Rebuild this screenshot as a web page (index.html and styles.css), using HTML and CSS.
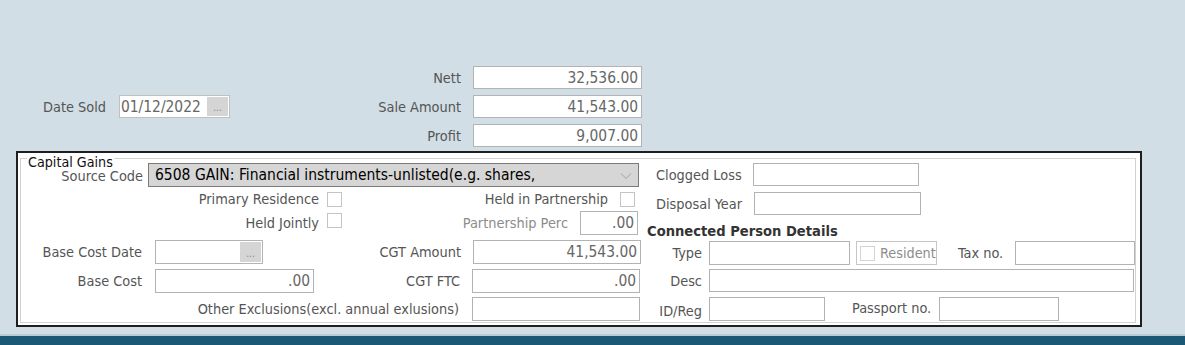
FILE: index.html
```html
<!DOCTYPE html>
<html lang="en">
<head>
  <meta charset="UTF-8">
  <title>Capital Gains</title>
  <link rel="stylesheet" href="styles.css">
</head>
<body>

  <section class="sale">
    <span class="lbl lbl--date">Date Sold</span>
    <div class="field field--date-sold">
      <span class="field__text">01/12/2022</span>
      <span class="dots">...</span>
    </div>

    <span class="lbl lbl--r1">Nett</span>
    <div class="field field--num r1">32,536.00</div>
    <span class="lbl lbl--r2">Sale Amount</span>
    <div class="field field--num r2">41,543.00</div>
    <span class="lbl lbl--r3">Profit</span>
    <div class="field field--num r3">9,007.00</div>
  </section>

  <section class="group">
    <div class="frame">
      <span class="frame__title">Capital Gains</span>

      <div class="panel panel--left">
        <div class="row row--1">
          <span class="lbl w122">Source Code</span>
          <div class="select">
            <span>6508 GAIN: Financial instruments-unlisted(e.g. shares,</span>
            <svg class="chev" width="12" height="8" viewBox="0 0 12 8"><polyline points="1,1.5 6,6.5 11,1.5" fill="none" stroke="#b8b8b8" stroke-width="1.2"/></svg>
          </div>
        </div>
        <div class="row row--2">
          <span class="lbl w298">Primary Residence</span>
          <span class="check gap8"></span>
          <span class="lbl w266">Held in Partnership</span>
          <span class="check gap12"></span>
        </div>
        <div class="row row--3">
          <span class="lbl w298">Held Jointly</span>
          <span class="check gap8 check--up"></span>
          <span class="lbl lbl--off w226">Partnership Perc</span>
          <div class="field field--num perc">.00</div>
        </div>
        <div class="row row--4">
          <span class="lbl w121">Base Cost Date</span>
          <div class="field field--date base-date">
            <span class="field__text"></span>
            <span class="dots">...</span>
          </div>
          <span class="lbl w198">CGT Amount</span>
          <div class="field field--num amount">41,543.00</div>
        </div>
        <div class="row row--5">
          <span class="lbl w121">Base Cost</span>
          <div class="field field--num base-cost">.00</div>
          <span class="lbl w146">CGT FTC</span>
          <div class="field field--num amount">.00</div>
        </div>
        <div class="row row--6">
          <span class="lbl w438">Other Exclusions(excl. annual exlusions)</span>
          <div class="field amount other"></div>
        </div>
      </div>

      <div class="panel panel--right">
        <div class="row row--r1">
          <span class="lbl lbl--left w108">Clogged Loss</span>
          <div class="field loss"></div>
        </div>
        <div class="row row--r2">
          <span class="lbl lbl--left w109">Disposal Year</span>
          <div class="field year"></div>
        </div>
        <h3 class="heading">Connected Person Details</h3>
        <div class="row row--r4">
          <span class="lbl w57">Type</span>
          <div class="field type"></div>
          <div class="resident">
            <span class="check check--small"></span>
            <span>Resident</span>
          </div>
          <span class="lbl lbl--left tax-lbl">Tax no.</span>
          <div class="field tax"></div>
        </div>
        <div class="row row--r5">
          <span class="lbl w57">Desc</span>
          <div class="field desc"></div>
        </div>
        <div class="row row--r6">
          <span class="lbl lbl--low w57">ID/Reg</span>
          <div class="field idreg"></div>
          <span class="lbl lbl--left passport-lbl">Passport no.</span>
          <div class="field passport"></div>
        </div>
      </div>
    </div>
  </section>

  <div class="footer-bar"></div>

</body>
</html>
```

FILE: styles.css
```css
* {
  box-sizing: border-box;
  margin: 0;
  padding: 0;
}

:root {
  --page-bg: #d1dee5;
  --label: #555555;
  --label-off: #8c8c8c;
  --value: #666666;
  --field-border: #b3b3b3;
  --font-size: 14.4px;
  --value-size: 15.4px;
}

html, body {
  height: 345px;
  overflow: hidden;
}
body {
  background: var(--page-bg);
  font-family: "DejaVu Sans Condensed", "DejaVu Sans", sans-serif;
  font-size: var(--font-size);
  color: var(--label);
  display: flex;
  flex-direction: column;
}

/* Labels */

.lbl {
  display: block;
  text-align: right;
  white-space: nowrap;
  line-height: 16px;
  flex: none;
}
.lbl--left { text-align: left; }
.lbl--off { color: var(--label-off); }

.w57  { width: 57px; margin-right: 7px; }
.w108 { width: 108px; padding-left: 11px; }
.w109 { width: 109px; padding-left: 11px; }
.w121 { width: 121px; margin-right: 13px; }
.w122 { width: 122px; margin-right: 5px; line-height: 14px; margin-top: 2px; }
.w146 { width: 146px; margin-right: 12px; }
.w198 { width: 198px; margin-right: 12px; }
.w226 { width: 226px; margin-right: 12px; }
.w266 { width: 266px; }
.w298 { width: 298px; }
.w438 { width: 438px; margin-right: 13px; }

/* Inputs */

.field {
  height: 23px;
  background: #fff;
  border: 1px solid var(--field-border);
  color: var(--value);
  font-size: var(--value-size);
  display: flex;
  align-items: center;
  flex: none;
  white-space: nowrap;
}
.field--num {
  justify-content: flex-end;
  padding-right: 3px;
}
.field--date .field__text,
.field--date-sold .field__text {
  flex: 1;
  padding-left: 1px;
}
.dots {
  align-self: stretch;
  width: 21px;
  margin: 1px;
  background: #d5d5d5;
  color: #8a8a8a;
  font-size: 10px;
  display: flex;
  justify-content: center;
  align-items: flex-end;
  padding-bottom: 3px;
}

.check {
  display: block;
  width: 15px;
  height: 15px;
  border: 1px solid #c4c4c4;
  background: #fff;
  flex: none;
}
.gap8 { margin-left: 8px; }
.gap12 { margin-left: 12px; }
.check--up { margin-top: -5px; }

/* Top: sale figures */

.sale {
  height: 151px;
  padding-top: 66px;
  display: grid;
  grid-template-columns: 119px 111px 243px 169px;
  grid-template-rows: 23px 23px 23px;
  row-gap: 6px;
  align-items: center;
}
.lbl--date {
  grid-column: 1;
  grid-row: 2;
  padding-right: 13px;
}
.field--date-sold {
  grid-column: 2;
  grid-row: 2;
  border-color: #c0c0c0;
}
.lbl--r1, .lbl--r2, .lbl--r3 {
  grid-column: 3;
  padding-right: 12px;
}
.lbl--r1 { grid-row: 1; }
.lbl--r2 { grid-row: 2; }
.lbl--r3 { grid-row: 3; }
.r1, .r2, .r3 { grid-column: 4; }
.r1 { grid-row: 1; }
.r2 { grid-row: 2; }
.r3 { grid-row: 3; }

/* Capital gains group */

.group {
  margin-left: 16px;
  width: 1126px;
  height: 176px;
  border: 2px solid #1f1f1f;
  background: #fff;
  padding: 5px 4px 2px 2px;
}
.frame {
  position: relative;
  height: 100%;
  border: 1px solid #d2d2d2;
  display: grid;
  grid-template-columns: 624px 1fr;
}
.frame__title {
  position: absolute;
  left: 6px;
  top: -3px;
  padding: 0 1px;
  background: #fff;
  color: #111;
  font-size: 14.2px;
  line-height: 12px;
}

.panel {
  padding-top: 4px;
}
.row {
  display: flex;
  align-items: center;
}
.row--1 { height: 24px; }
.row--2 { height: 16px; margin-top: 4px; }
.row--3 { height: 24px; margin-top: 4px; }
.row--4 { height: 24px; margin-top: 5px; }
.row--5 { height: 24px; margin-top: 5px; }
.row--6 { height: 24px; margin-top: 4px; }

.row--3 .field,
.row--4 .field,
.row--5 .field,
.row--6 .field { height: 24px; }

.select {
  width: 491px;
  height: 24px;
  background: #d6d6d6;
  border: 1px solid #7b7b7b;
  color: #000;
  font-size: 15.5px;
  display: flex;
  align-items: center;
  justify-content: space-between;
  padding: 0 6px 0 6px;
}
.chev { margin-top: 1px; }

.perc { width: 58px; }
.base-date { width: 108px; }
.base-cost { width: 159px; }
.amount { width: 168px; }

.row--r1 { height: 23px; }
.row--r2 { height: 23px; margin-top: 6px; }
.heading {
  margin-top: 8px;
  padding-left: 2px;
  font-size: 14.6px;
  line-height: 16px;
  font-weight: bold;
  color: #333;
}
.row--r4 { height: 24px; margin-top: 2px; }
.row--r5 { height: 23px; margin-top: 4px; }
.row--r6 { height: 24px; margin-top: 5px; }

.loss { width: 166px; }
.year { width: 167px; }
.type { width: 141px; height: 24px; }
.resident {
  width: 81px;
  height: 24px;
  margin-left: 6px;
  border: 1px solid #c6c6c6;
  display: flex;
  align-items: center;
  gap: 5px;
  padding-left: 3px;
  color: var(--label-off);
  font-size: 14.3px;
}
.check--small { border-color: #d4d4d4; }
.tax-lbl { width: 78px; padding-left: 21px; }
.tax { width: 120px; height: 24px; }
.desc { width: 425px; }
.idreg { width: 116px; height: 24px; }
.passport-lbl { width: 114px; padding-left: 27px; margin-top: -3px; }
.passport { width: 120px; height: 24px; }
.lbl--low { margin-top: 4px; }

.footer-bar {
  margin-top: 7px;
  height: 11px;
  border-top: 2px solid #b9cbd5;
  background: #1b5876;
}
```
